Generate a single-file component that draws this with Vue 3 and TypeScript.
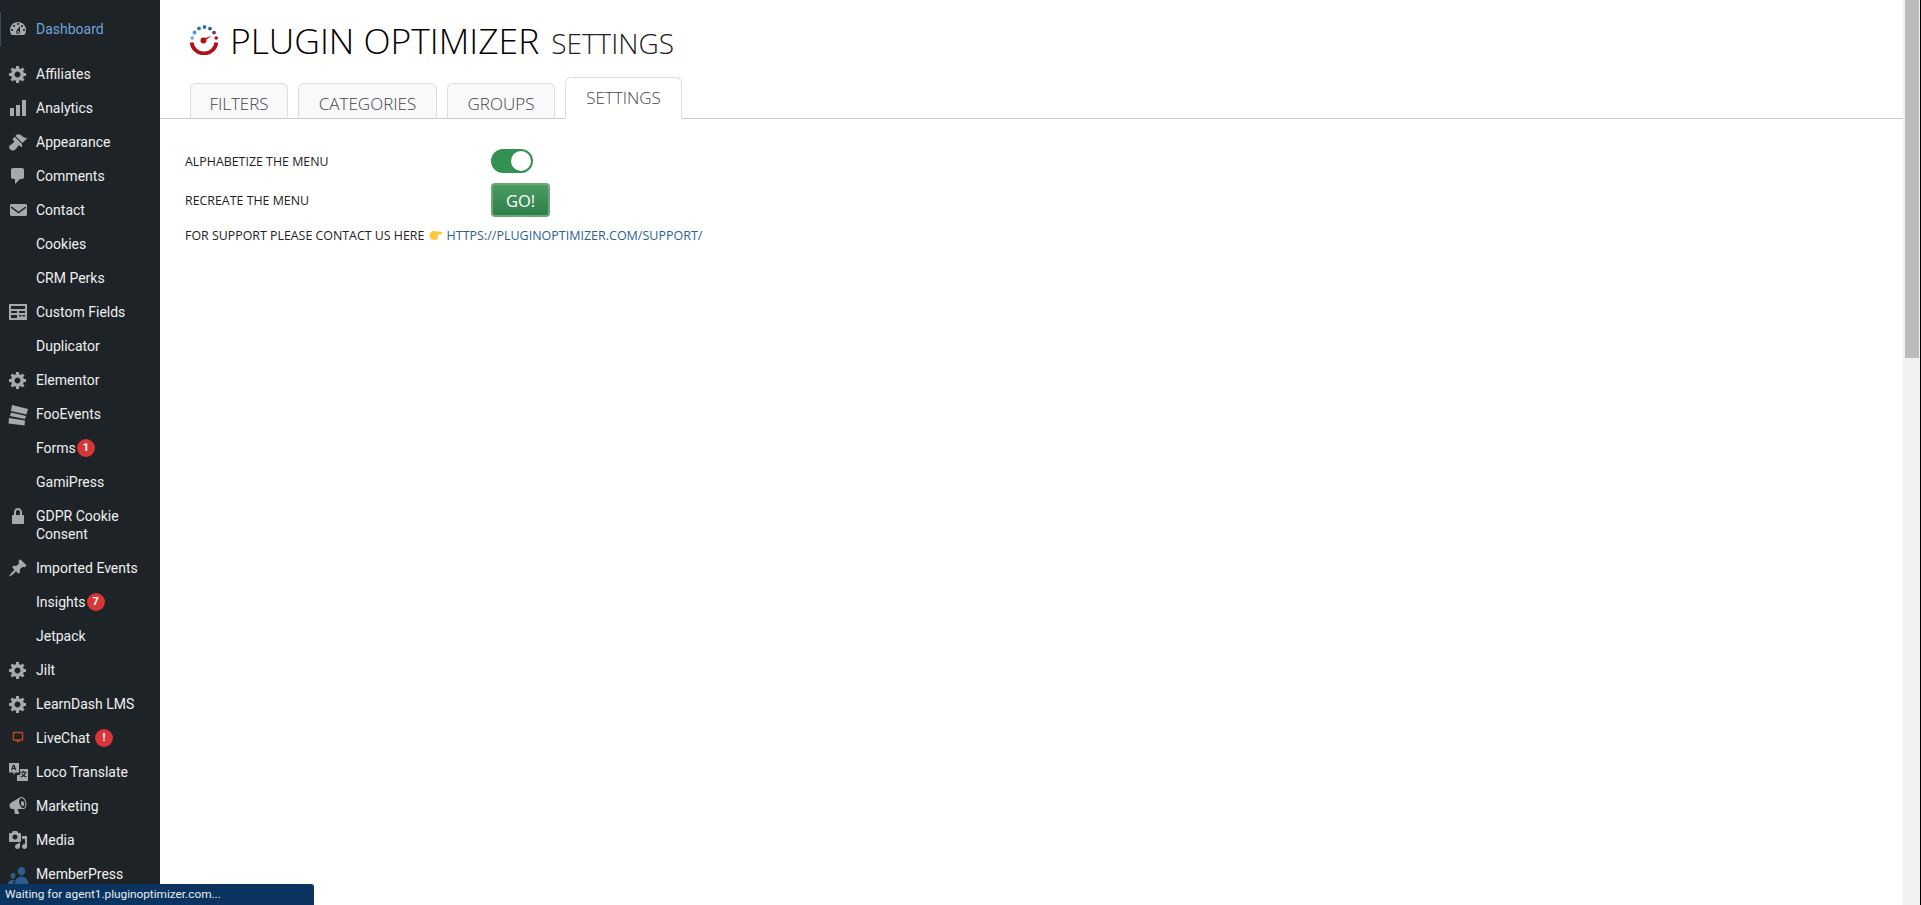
<script setup lang="ts">
import { ref } from "vue";

interface MenuItem {
  label: string;
  icon?: string;
  badge?: string;
}

interface Tab {
  label: string;
  width: number;
}

const gear =
  "M18 12h-2.18c-.17.7-.44 1.35-.81 1.93l1.54 1.54-2.1 2.1-1.54-1.54c-.58.36-1.23.63-1.91.79V19H8v-2.18c-.68-.16-1.33-.43-1.91-.79l-1.54 1.54-2.12-2.12 1.54-1.54c-.36-.58-.63-1.23-.79-1.91H1V9.03h2.17c.16-.7.44-1.35.8-1.94L2.43 5.55l2.1-2.1 1.54 1.54c.58-.37 1.24-.64 1.93-.81V2h3v2.18c.68.16 1.33.43 1.91.79l1.54-1.54 2.12 2.12-1.54 1.54c.36.59.64 1.24.8 1.94H18V12zm-8.5 1.5c1.66 0 3-1.34 3-3s-1.34-3-3-3-3 1.34-3 3 1.34 3 3 3z";

const icons: Record<string, string> = {
  gear,
  dashboard:
    "M3.76 16h12.48c1.1-1.37 1.76-3.11 1.76-5 0-4.42-3.58-8-8-8s-8 3.58-8 8c0 1.89.66 3.63 1.76 5zM10 4c.55 0 1 .45 1 1s-.45 1-1 1-1-.45-1-1 .45-1 1-1zM6 6c.55 0 1 .45 1 1s-.45 1-1 1-1-.45-1-1 .45-1 1-1zm8 0c.55 0 1 .45 1 1s-.45 1-1 1-1-.45-1-1 .45-1 1-1zm-5.37 5.55L12 7v6c0 1.1-.9 2-2 2s-2-.9-2-2c0-.57.24-1.08.63-1.45zM4 10c.55 0 1 .45 1 1s-.45 1-1 1-1-.45-1-1 .45-1 1-1zm12 0c.55 0 1 .45 1 1s-.45 1-1 1-1-.45-1-1 .45-1 1-1zm-5 3c0-.55-.45-1-1-1s-1 .45-1 1 .45 1 1 1 1-.45 1-1z",
  chart: "M18 18V2h-4v16h4zm-6 0V7H8v11h4zm-6 0v-8H2v8h4z",
  brush:
    "M14.48 11.06L7.41 3.99l1.5-1.5c.5-.56 2.3-.47 3.51.32 1.21.8 1.43 1.28 2.91 2.1 1.18.64 2.45 1.26 4.45.85zm-.71.71L6.7 4.7 4.93 6.47c-.39.39-.39 1.02 0 1.41l1.06 1.06c.39.39.39 1.03 0 1.42-.6.6-1.43 1.11-2.21 1.69-.35.26-.7.53-1.01.84C1.43 13.23 1 14 1.22 15.47c.2 1.47 1.56 2.83 3.03 3.03 1.47.21 2.24-.22 3.58-1.58.31-.31.58-.66.84-1.01.58-.78 1.09-1.61 1.69-2.21.39-.39 1.03-.39 1.42 0l1.06 1.06c.39.39 1.02.39 1.41 0z",
  comment: "M5 2h9c1.1 0 2 .9 2 2v7c0 1.1-.9 2-2 2h-2l-5 5v-5H5c-1.1 0-2-.9-2-2V4c0-1.1.9-2 2-2z",
  mail:
    "M19 14.5v-9c0-.83-.67-1.5-1.5-1.5H3.49c-.83 0-1.5.67-1.5 1.5v9c0 .83.67 1.5 1.5 1.5H17.5c.83 0 1.5-.67 1.5-1.5zM17.3 6.6L10.500 11.800 3.700 6.600l-.9 1.100 7.700 5.900 7.700-5.900z",
  table: "M1 2h18v16H1V2zm2 2v3h14V4H3zm0 5v2h6V9H3zm8 0v2h6V9h-6zm-8 4v3h6v-3H3zm8 0v1.500h2.500V13H11zm3.500 0v1.500H17V13h-2.500z",
  stack: "M4 1L20 5l-1.500 5.500L3 7zM3 8.500L18 12l-1 3L2 12zM1 14l16 2.500-.5 5L.5 19.500z",
  lock:
    "M14 9h1c.55 0 1 .45 1 1v7c0 .55-.45 1-1 1H5c-.55 0-1-.45-1-1v-7c0-.55.45-1 1-1h1V6c0-2.21 1.79-4 4-4s4 1.79 4 4v3zm-2 0V6c0-1.1-.9-2-2-2s-2 .9-2 2v3h4z",
  pin:
    "M10.44 3.02l1.82-1.82 6.36 6.35-1.83 1.82c-1.05-.68-2.48-.57-3.41.36l-.75.75c-.92.93-1.04 2.35-.35 3.41l-1.83 1.82-2.41-2.41-2.8 2.79c-.42.42-3.38 2.71-3.8 2.29s1.86-3.39 2.28-3.81l2.79-2.79L4.1 9.36l1.83-1.82c1.05.69 2.48.57 3.4-.36l.75-.75c.93-.92 1.05-2.35.36-3.41z",
  translate:
    "M1 1h10v9.500H7.500L5.500 13v-2.500H1V1zm4 1.800L3 8.200h1.300l.4-1.200h2l.4 1.200h1.300L6.400 2.800H5zm.7 1.600L6.300 6H5l.7-1.600zM12 7h8v12H9v-6h3V7zm2.900 1.800v1h-3.200v1h4.900c-.2.8-.6 1.500-1.100 2-.5-.4-.8-.9-1-1.400h-1.100c.3.8.7 1.500 1.300 2.100-.6.4-1.400.7-2.300.9l.4 1c1.100-.2 2-.6 2.800-1.200.7.5 1.600 1 2.700 1.200l.4-1c-.9-.2-1.700-.5-2.300-.9.8-.8 1.300-1.800 1.500-2.700h.6v-1h-2.400v-1h-1.200z",
  megaphone:
    "M18.15 5.94c.46 1.62.38 3.22-.02 4.48-.42 1.28-1.26 2.18-2.3 2.48-.16.06-.26.06-.4.06-.06.02-.12.02-.18.02-.06.02-.14.02-.22.02H9.5l1.7 4.5c.1.3-.1.5-.4.5H7.3c-.2 0-.4-.2-.4-.4L6 13H4.25c-.5.06-1.08-.18-1.54-.62s-.88-1.08-1.06-1.88c-.24-.8-.2-1.56-.02-2.2.18-.62.58-1.08 1.06-1.3l9-5.42c.3-.2.6-.36 1-.46 1.04-.3 2.24.1 3.22.98s1.84 2.24 2.26 3.86zM15.57 11.92c.4-.1.74-.34 1.04-.7.58-.7.86-1.76.86-3.04 0-.64-.1-1.3-.26-1.98-.34-1.36-1.02-2.5-1.78-3.24s-1.68-1.1-2.46-.88c-.38.12-.72.34-.98.7-.6.7-.88 1.8-.88 3.08 0 .64.08 1.3.24 1.98.34 1.34 1.04 2.48 1.8 3.22.78.76 1.62 1.08 2.42.86zM14 5.2c.9-.3 1.9.6 2.2 2s-.1 2.5-1 2.8-1.9-.6-2.2-2 .1-2.5 1-2.8z",
  media:
    "M13 11V4c0-.55-.45-1-1-1h-1.67L9 1H5L3.67 3H2c-.55 0-1 .45-1 1v7c0 .55.45 1 1 1h10c.55 0 1-.45 1-1zM7 4.5c1.38 0 2.5 1.12 2.5 2.5S8.38 9.5 7 9.5 4.5 8.38 4.5 7 5.62 4.5 7 4.5zM14 6h5v10.5c0 1.38-1.12 2.5-2.5 2.5S14 17.88 14 16.5s1.12-2.5 2.5-2.5c.17 0 .34.02.5.05V9h-3V6zm-4 8.05V13h2v3.5c0 1.38-1.12 2.5-2.5 2.5S7 17.88 7 16.5 8.12 14 9.500 14c.17 0 .34.02.5.05z",
  members:
    "M13.500 3c2.200 0 3.800 1.800 3.800 4s-1.600 4.500-3.800 4.500-3.800-2.300-3.800-4.500 1.600-4 3.800-4zM6.500 22c0-6 2.500-9.500 7-9.500s7 3.500 7 9.500h-14zM5 9c1.400 0 2.500 1.100 2.500 2.600S6.400 15 5 15s-2.500-1.900-2.500-3.400S3.600 9 5 9zM-.5 22c0-4 1.800-6 5.500-6 .6 0 1.200.1 1.700.3C5.400 17.500 5 19.500 5 22H-.5z",
  chat: "M4 1h12a1.500 1.500 0 0 1 1.500 1.500v10A1.500 1.500 0 0 1 16 14h-3.500L10 17.500 7.500 14H4a1.500 1.500 0 0 1-1.500-1.500v-10A1.500 1.500 0 0 1 4 1zm.5 2.200v8.600h11V3.200h-11z",
};

const menu: MenuItem[] = [
  { label: "Affiliates", icon: "gear" },
  { label: "Analytics", icon: "chart" },
  { label: "Appearance", icon: "brush" },
  { label: "Comments", icon: "comment" },
  { label: "Contact", icon: "mail" },
  { label: "Cookies" },
  { label: "CRM Perks" },
  { label: "Custom Fields", icon: "table" },
  { label: "Duplicator" },
  { label: "Elementor", icon: "gear" },
  { label: "FooEvents", icon: "stack" },
  { label: "Forms", badge: "1" },
  { label: "GamiPress" },
  { label: "GDPR Cookie Consent", icon: "lock" },
  { label: "Imported Events", icon: "pin" },
  { label: "Insights", badge: "7" },
  { label: "Jetpack" },
  { label: "Jilt", icon: "gear" },
  { label: "LearnDash LMS", icon: "gear" },
  { label: "LiveChat", icon: "chat", badge: "!" },
  { label: "Loco Translate", icon: "translate" },
  { label: "Marketing", icon: "megaphone" },
  { label: "Media", icon: "media" },
  { label: "MemberPress", icon: "members" },
];

const tabs: Tab[] = [
  { label: "FILTERS", width: 98 },
  { label: "CATEGORIES", width: 139 },
  { label: "GROUPS", width: 108 },
  { label: "SETTINGS", width: 117 },
];
const activeTab = ref("SETTINGS");
const alphabetize = ref(true);
</script>

<template>
  <div class="page">
    <nav class="sidebar">
      <a class="item current">
        <span class="icon"><svg viewBox="0 0 20 20"><path fill-rule="evenodd" :d="icons.dashboard" /></svg></span>
        <span class="name">Dashboard</span>
      </a>
      <ul class="menu">
        <li v-for="item in menu" :key="item.label">
          <a class="item" :class="{ 'item-chat': item.icon === 'chat', 'item-blue': item.icon === 'members' }">
            <span class="icon">
              <svg v-if="item.icon" viewBox="0 0 20 20"><path fill-rule="evenodd" :d="icons[item.icon]" /></svg>
            </span>
            <span class="name">
              {{ item.label }}<span v-if="item.badge" class="badge" :class="{ far: item.icon === 'chat' }">{{ item.badge }}</span>
            </span>
          </a>
        </li>
      </ul>
    </nav>

    <main class="content">
      <header class="title">
        <svg class="logo" viewBox="0 0 30 30">
          <circle cx="3.200" cy="13" r="1.800" fill="#6ea6e6" />
          <circle cx="5.500" cy="7.500" r="1.900" fill="#4a90dc" />
          <circle cx="10" cy="3.400" r="1.900" fill="#2f6fb7" />
          <circle cx="15.500" cy="2" r="1.900" fill="#2f6fb7" />
          <circle cx="21" cy="3.600" r="1.900" fill="#2a5f9f" />
          <circle cx="25" cy="7.600" r="1.900" fill="#6d3a62" />
          <circle cx="27.200" cy="13" r="1.800" fill="#b01116" />
          <path d="M2.600 17.500a12.500 12.500 0 0 0 24.800 0" fill="none" stroke="#b01116" stroke-width="3.800" />
          <circle cx="14.500" cy="15.500" r="3" fill="#b01116" />
          <path d="M15 13.500l8-2.700-7.500 5z" fill="#b01116" />
        </svg>
        <h1>PLUGIN OPTIMIZER</h1>
        <span class="sub">SETTINGS</span>
      </header>

      <div class="tabs">
        <button
          v-for="tab in tabs"
          :key="tab.label"
          class="tab"
          :class="{ active: tab.label === activeTab }"
          :style="{ width: tab.width + 'px' }"
          @click="activeTab = tab.label"
        >
          {{ tab.label }}
        </button>
      </div>

      <section class="settings">
        <div class="row">
          <span class="label">ALPHABETIZE THE MENU</span>
          <button class="toggle" :class="{ on: alphabetize }" @click="alphabetize = !alphabetize">
            <span class="knob"></span>
          </button>
        </div>
        <div class="row row-go">
          <span class="label">RECREATE THE MENU</span>
          <button class="go">GO!</button>
        </div>
        <p class="support">
          FOR SUPPORT PLEASE CONTACT US HERE
          <svg class="hand" viewBox="0 0 14 11">
            <path d="M1.500 2.500C3 1 5 .8 6.500 1.200L12.500 2c1.300.2 1.300 2 0 2.200L8.800 4.500c.5 1.600.4 3.300-.3 4.300C7.800 9.800 6 10.300 4.500 10 2 9.800.5 8 .4 5.800c0-1.300.4-2.400 1.100-3.300z" fill="#ffc83d" />
          </svg>
          <a class="link">HTTPS://PLUGINOPTIMIZER.COM/SUPPORT/</a>
        </p>
      </section>
    </main>

    <div class="scrollbar"><div class="thumb"></div></div>
    <div class="edge"></div>
    <div class="status">Waiting for agent1.pluginoptimizer.com...</div>
  </div>
</template>

<style>
html,
body {
  margin: 0;
  height: 905px;
  overflow: hidden;
}
</style>

<style scoped>
.page {
  display: flex;
  position: relative;
  height: 905px;
  overflow: hidden;
  background: #fff;
  font-family: "Open Sans", "Liberation Sans", sans-serif;
}

.sidebar {
  flex: 0 0 160px;
  background: #1d2327;
  padding-top: 12px;
  box-sizing: border-box;
  overflow: hidden;
  font-family: Roboto, "Liberation Sans", sans-serif;
  font-size: 14px;
  line-height: 18px;
  color: #f0f0f1;
}

.menu {
  list-style: none;
  margin: 11px 0 0;
  padding: 0;
}

.item {
  display: flex;
  align-items: flex-start;
  padding: 8px 0;
}

.item.current {
  color: #6ea6dc;
  box-shadow: inset 1px 0 0 #3a4a58;
}

.icon {
  flex: 0 0 36px;
  height: 18px;
  display: flex;
  justify-content: center;
  align-items: center;
}

.icon svg {
  width: 20px;
  height: 20px;
  fill: #a7aaad;
  overflow: visible;
}

.item-chat .icon svg {
  width: 14px;
  height: 14px;
  fill: #c0452a;
}

.item-blue .icon svg {
  fill: #2f5c8f;
}

.name {
  flex: 1;
  padding-right: 8px;
}

.badge {
  display: inline-block;
  width: 18px;
  height: 18px;
  margin-left: 1px;
  border-radius: 50%;
  background: #d63638;
  color: #fff;
  font-size: 11px;
  font-weight: 700;
  line-height: 18px;
  text-align: center;
  vertical-align: top;
}

.badge.far {
  margin-left: 5px;
}

.content {
  flex: 1;
  min-width: 0;
}

.title {
  display: flex;
  align-items: baseline;
  padding: 19px 0 0 29px;
  height: 65px;
  box-sizing: border-box;
  color: #000;
}

.logo {
  width: 30px;
  height: 30px;
  align-self: flex-start;
  margin: 6px 11px 0 0;
}

h1 {
  margin: 0;
  font-size: 35.400px;
  font-weight: 300;
  line-height: 42px;
}

.sub {
  margin-left: 12px;
  font-size: 28px;
  font-weight: 300;
  color: #222;
}

.tabs {
  display: flex;
  align-items: flex-end;
  gap: 10px;
  height: 54px;
  padding-left: 30px;
  border-bottom: 1px solid #ccc;
  margin-top: -1px;
}

.tab {
  height: 36px;
  margin-bottom: -1px;
  padding: 5px 0 0;
  border: 1px solid #ddd;
  border-bottom: 1px solid #ccc;
  border-radius: 6px 6px 0 0;
  background: #f9f9fb;
  color: #444;
  font-family: inherit;
  font-size: 17px;
  font-weight: 300;
  cursor: pointer;
}

.tab.active {
  height: 42px;
  padding: 0 0 2px;
  background: #fff;
  border-bottom-color: #fff;
}

.settings {
  padding: 30px 0 0 25px;
  color: #222;
  font-size: 12.400px;
}

.row {
  display: flex;
  align-items: center;
}

.label {
  flex: 0 0 306px;
}

.row-go {
  margin-top: 10px;
}

.toggle {
  position: relative;
  width: 42px;
  height: 24px;
  padding: 0;
  border: none;
  border-radius: 12px;
  background: #ccc;
  cursor: pointer;
}

.toggle.on {
  background: #339152;
}

.knob {
  position: absolute;
  top: 2px;
  right: 2px;
  width: 20px;
  height: 20px;
  border-radius: 50%;
  background: #fff;
}

.go {
  width: 59px;
  height: 34px;
  padding: 0;
  border: 2px solid #6fa877;
  border-radius: 4px;
  background: linear-gradient(#4a9c62, #2e8049);
  color: #fff;
  font-family: inherit;
  font-size: 16.500px;
  cursor: pointer;
}

.support {
  margin: 10px 0 0;
  line-height: 17px;
}

.hand {
  width: 14px;
  height: 11px;
  margin: 0 4px 0 1px;
  vertical-align: -1px;
}

.link {
  color: #2c5f94;
  font-size: 12.500px;
}

.scrollbar {
  flex: 0 0 17px;
  background: #f1f1f1;
  box-sizing: border-box;
  padding: 0 1px 0 2px;
}

.thumb {
  height: 358px;
  background: #bcbcbc;
}

.edge {
  flex: 0 0 1px;
  background: #000;
}

.status {
  position: absolute;
  left: 0;
  bottom: 0;
  width: 314px;
  height: 21px;
  box-sizing: border-box;
  padding-left: 5px;
  border-radius: 0 3px 0 0;
  background: #0b335f;
  color: #e8edf3;
  font-family: Roboto, "Liberation Sans", sans-serif;
  font-size: 11.800px;
  line-height: 21px;
}
</style>
